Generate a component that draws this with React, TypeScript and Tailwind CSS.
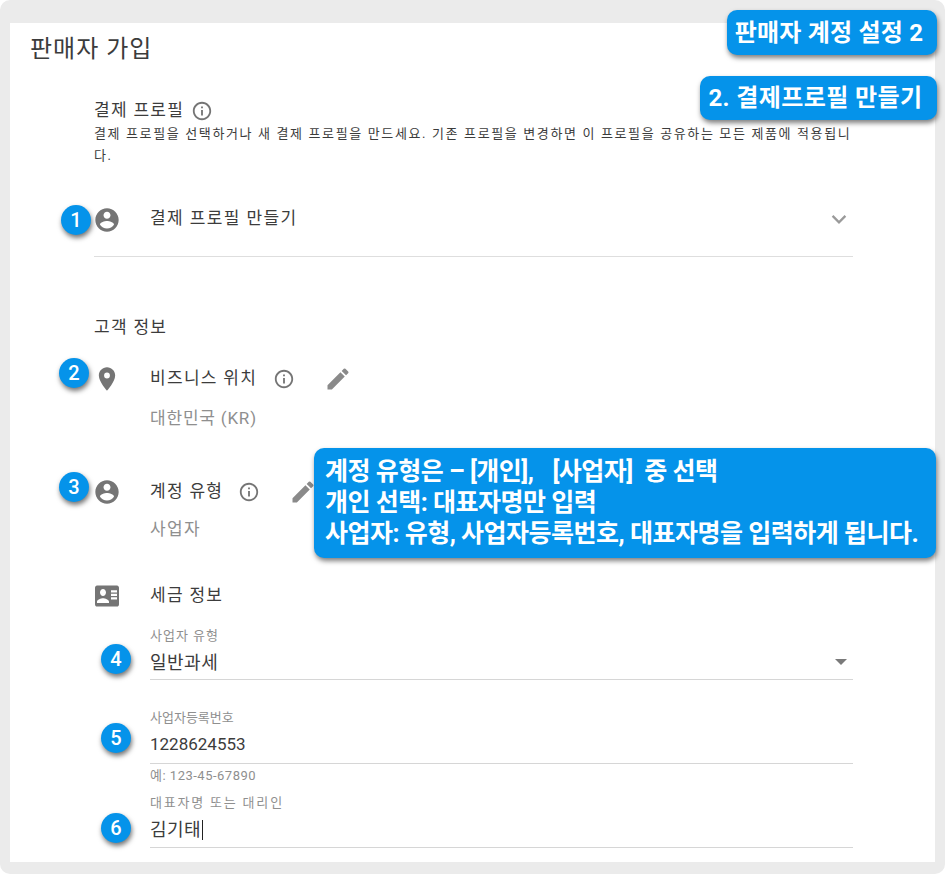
const KR = { fontFamily: 'Roboto, "Noto Sans CJK KR", sans-serif' };

function Person({ className = "" }: { className?: string }) {
  return (
    <svg viewBox="0 0 24 24" className={className} fill="#757575">
      <path d="M12 2C6.48 2 2 6.48 2 12s4.48 10 10 10 10-4.48 10-10S17.52 2 12 2zm0 3c1.66 0 3 1.34 3 3s-1.34 3-3 3-3-1.34-3-3 1.34-3 3-3zm0 14.2c-2.5 0-4.71-1.28-6-3.22.03-1.99 4-3.08 6-3.08 1.99 0 5.97 1.09 6 3.08-1.29 1.94-3.5 3.22-6 3.22z" />
    </svg>
  );
}

function Info({ className = "" }: { className?: string }) {
  return (
    <svg viewBox="0 0 24 24" className={className} fill="#757575">
      <path d="M11 7h2v2h-2zm0 4h2v6h-2zm1-9C6.48 2 2 6.48 2 12s4.48 10 10 10 10-4.48 10-10S17.52 2 12 2zm0 18c-4.41 0-8-3.59-8-8s3.59-8 8-8 8 3.59 8 8-3.59 8-8 8z" />
    </svg>
  );
}

function Pencil({ className = "" }: { className?: string }) {
  return (
    <svg viewBox="0 0 24 24" className={className} fill="#8a8a8a">
      <path d="M3 17.25V21h3.75L17.81 9.94l-3.75-3.75L3 17.25zM20.71 7.04a1 1 0 0 0 0-1.41l-2.34-2.34a1 1 0 0 0-1.41 0l-1.83 1.83 3.75 3.75 1.83-1.83z" />
    </svg>
  );
}

function Pin({ className = "" }: { className?: string }) {
  return (
    <svg viewBox="0 0 24 24" className={className} fill="#757575">
      <path d="M12 2C8.13 2 5 5.13 5 9c0 5.25 7 13 7 13s7-7.75 7-13c0-3.87-3.13-7-7-7zm0 9.5a2.5 2.5 0 0 1 0-5 2.5 2.5 0 0 1 0 5z" />
    </svg>
  );
}

function IdCard({ className = "" }: { className?: string }) {
  return (
    <svg viewBox="0 0 24 24" preserveAspectRatio="none" className={className} fill="#757575">
      <path d="M22 3H2C.9 3 0 3.9 0 5v14c0 1.1.9 2 2 2h20c1.1 0 2-.9 2-2V5c0-1.1-.9-2-2-2zM8 6c1.66 0 3 1.34 3 3s-1.34 3-3 3-3-1.34-3-3 1.34-3 3-3zm6 12H2v-1c0-2 4-3.1 6-3.1s6 1.1 6 3.1v1zm8-6h-6v-2h6v2zm0-3h-6V7h6v2zm0 6h-6v-2h6v2z" />
    </svg>
  );
}

function Badge({ n, className = "" }: { n: number; className?: string }) {
  return (
    <div className={`absolute flex h-[30px] w-[30px] items-center justify-center rounded-full bg-[#0593ea] text-[20px] font-medium text-white shadow-[1px_3px_5px_rgba(0,0,0,0.55)] ${className}`}>
      {n}
    </div>
  );
}

function Callout({ children, className = "" }: { children: React.ReactNode; className?: string }) {
  return (
    <div className={`absolute rounded-[10px] bg-[#0593ea] font-bold text-white shadow-[1px_3px_5px_rgba(0,0,0,0.5)] ${className}`}>
      {children}
    </div>
  );
}

export default function App() {
  return (
    <div style={KR} className="relative h-[874px] w-[949px] overflow-hidden bg-white">
      <div className="h-[874px] w-[945px] rounded-[10px] bg-[#ebebeb] pl-2.5 pr-2.5 pt-[23px] pb-3">
        <div className="h-[839px] w-[925px] overflow-hidden bg-white">
          <h1 className="pl-[20px] pt-[11px] text-[24px] leading-[30px] tracking-[1px] text-[#3c3c3c]">판매자 가입</h1>

          <div className="pl-[84px] pr-[82px]">
            <div className="mt-[35px] flex h-[24px] items-center gap-[7px] text-[17px] tracking-[1.3px] text-[#3c3c3c]">
              결제 프로필 <Info className="h-[22px] w-[22px]" />
            </div>
            <p className="text-[13px] leading-[22px] tracking-[1.63px] text-[#3c3c3c]">
              결제 프로필을 선택하거나 새 결제 프로필을 만드세요. 기존 프로필을 변경하면 이 프로필을 공유하는 모든 제품에 적용됩니다.
            </p>

            <div className="mt-[39px] flex h-[51px] items-start border-b border-[#dedede]">
              <Person className="-ml-px h-[28px] w-[28px]" />
              <span className="ml-[29px] text-[17px] leading-[24px] tracking-[1.4px] text-[#3c3c3c]">결제 프로필 만들기</span>
              <svg viewBox="0 0 24 24" className="ml-auto h-[28px] w-[28px]" fill="none" stroke="#9a9a9a" strokeWidth="2">
                <path d="M6.5 8.5 12 14l5.5-5.5" />
              </svg>
            </div>

            <div className="mt-[58px] text-[17px] leading-[24px] tracking-[1.3px] text-[#3c3c3c]">고객 정보</div>

            <div className="mt-[26px] flex h-[28px] items-center">
              <Pin className="-ml-px h-[28px] w-[28px]" />
              <span className="ml-[29px] text-[17px] tracking-[1.3px] text-[#3c3c3c]">비즈니스 위치</span>
              <Info className="ml-[16px] h-[22px] w-[22px]" />
              <Pencil className="ml-[29px] h-[28px] w-[28px]" />
            </div>
            <div className="mt-[13px] pl-[56px] text-[17px] leading-[24px] tracking-[0.8px] text-[#8f8f8f]">대한민국 (KR)</div>

            <div className="mt-[48px] flex h-[28px] items-center">
              <Person className="-ml-px h-[28px] w-[28px]" />
              <span className="ml-[29px] text-[17px] tracking-[1.3px] text-[#3c3c3c]">계정 유형</span>
              <Info className="ml-[15px] h-[22px] w-[22px]" />
              <Pencil className="ml-[29px] h-[28px] w-[28px]" />
            </div>
            <div className="mt-[11px] pl-[56px] text-[17px] leading-[24px] tracking-[1.3px] text-[#8f8f8f]">사업자</div>

            <div className="mt-[41px] flex h-[28px] items-center">
              <IdCard className="ml-px h-[28px] w-[24px]" />
              <span className="ml-[31px] text-[17px] tracking-[1.3px] text-[#3c3c3c]">세금 정보</span>
            </div>

            <div className="pl-[56px]">
              <div className="mt-[17px] text-[13px] leading-[18px] tracking-[1px] text-[#8f8f8f]">사업자 유형</div>
              <div className="flex h-[35px] items-center justify-between border-b border-[#d6d6d6] text-[18px] tracking-[0.5px] text-[#3c3c3c]">
                일반과세
                <span className="mr-[6px] h-0 w-0 border-x-[6px] border-t-[6px] border-x-transparent border-t-[#7a7a7a]" />
              </div>

              <div className="mt-[29px] text-[13px] leading-[18px] text-[#8f8f8f]">사업자등록번호</div>
              <div className="flex h-[37px] items-center border-b border-[#d6d6d6] text-[17px] text-[#3c3c3c]">1228624553</div>
              <div className="mt-[3px] text-[13px] leading-[18px] tracking-[0.5px] text-[#8f8f8f]">예: 123-45-67890</div>

              <div className="mt-[9px] text-[13px] leading-[18px] tracking-[1.8px] text-[#8f8f8f]">대표자명 또는 대리인</div>
              <div className="flex h-[36px] items-center border-b border-[#d6d6d6] text-[18px] tracking-[0.5px] text-[#3c3c3c]">
                김기태<span className="ml-px h-[20px] w-px bg-[#222]" />
              </div>
            </div>
          </div>
        </div>
      </div>

      <Callout className="left-[727px] top-[10px] flex h-[45px] w-[210px] items-center justify-center pr-[6px] text-[24px] tracking-[0.2px]">판매자 계정 설정 2</Callout>
      <Callout className="left-[700px] top-[76px] flex h-[44px] w-[237px] items-center justify-center pr-[6px] text-[24px] tracking-[0.4px]">2. 결제프로필 만들기</Callout>
      <Callout className="left-[314px] top-[448px] h-[110px] w-[622px] pl-[11px] pt-[8px] text-[25px] leading-[31px] tracking-[-0.5px]">
        <div className="flex">
          <span className="whitespace-pre">계정 유형은 – [개인],</span>
          <span className="ml-[19px] whitespace-pre">[사업자]  중 선택</span>
        </div>
        <div>개인 선택: 대표자명만 입력</div>
        <div>사업자: 유형, 사업자등록번호, 대표자명을 입력하게 됩니다.</div>
      </Callout>

      <Badge n={1} className="left-[61px] top-[205px]" />
      <Badge n={2} className="left-[59px] top-[358px]" />
      <Badge n={3} className="left-[59px] top-[472px]" />
      <Badge n={4} className="left-[101px] top-[644px]" />
      <Badge n={5} className="left-[101px] top-[723px]" />
      <Badge n={6} className="left-[101px] top-[813px]" />
    </div>
  );
}
